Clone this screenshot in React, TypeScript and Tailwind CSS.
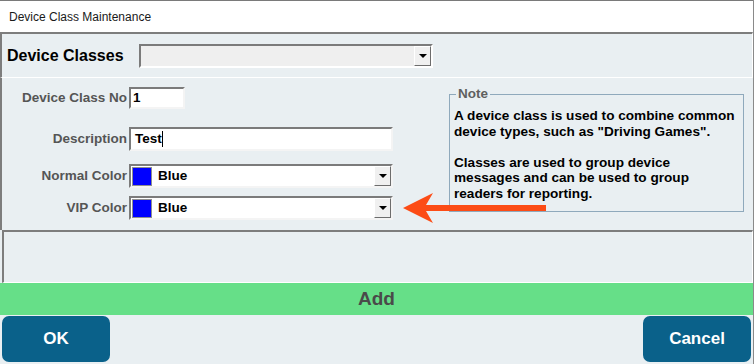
const font = { fontFamily: "'Liberation Sans', Arial, sans-serif" };

function DropButton() {
  return (
    <div className="w-[17px] h-full bg-[#f0f0f0] border border-t-white border-l-white border-r-[#6d6d6d] border-b-[#6d6d6d] flex items-center justify-center">
      <div className="w-0 h-0 border-l-[4px] border-r-[4px] border-t-[4px] border-l-transparent border-r-transparent border-t-black" />
    </div>
  );
}

function ColorSelect() {
  return (
    <div className="w-[264px] h-[24px] flex border-2 border-t-[#7b7b7b] border-l-[#7b7b7b] border-b-[#f4f4f4] border-r-[#f4f4f4] bg-white">
      <div className="flex-1 flex items-center pl-[1px]">
        <div className="w-[20px] h-[19px] bg-[#0000ff] border border-[#8f8f8f]" />
        <span className="ml-[6px] text-[13.5px] font-bold text-black">Blue</span>
      </div>
      <DropButton />
    </div>
  );
}

export default function App() {
  return (
    <div
      className="relative w-[754px] h-[364px] bg-[#e9eff2] flex flex-col overflow-hidden border-r border-[#8a8a8a]"
      style={font}
    >
      {/* Title bar */}
      <div className="h-[32px] shrink-0 bg-white border-t border-[#7a7a7a] flex items-center pl-[9px]">
        <span className="text-[12px] text-[#1a1a1a]">Device Class Maintenance</span>
      </div>

      {/* Device classes header */}
      <div className="h-[46px] shrink-0 border-t-2 border-l-2 border-[#7d7d7d] border-b border-b-white border-r border-r-white flex items-center">
        <span className="ml-[5px] w-[120px] text-[16px] font-bold text-black whitespace-nowrap">Device Classes</span>
        <div className="ml-[12px] w-[294px] h-[24px] flex border-2 border-t-[#7b7b7b] border-l-[#7b7b7b] border-b-white border-r-white bg-[#efefef]">
          <div className="flex-1" />
          <DropButton />
        </div>
      </div>

      {/* Form */}
      <div className="h-[152px] shrink-0 flex border-l-2 border-[#7d7d7d]">
        <div className="w-[447px] flex flex-col">
          <div className="flex items-center mt-[9px]">
            <span className="w-[127px] text-right pr-[2px] text-[13.5px] font-bold text-[#555] whitespace-nowrap">Device Class No</span>
            <div className="w-[56px] h-[22px] border-2 border-t-[#7b7b7b] border-l-[#7b7b7b] border-b-[#f4f4f4] border-r-[#f4f4f4] bg-white flex items-center pl-[2px] text-[13.5px] font-bold text-black">
              1
            </div>
          </div>
          <div className="flex items-center mt-[18px]">
            <span className="w-[127px] text-right pr-[2px] text-[13.5px] font-bold text-[#555]">Description</span>
            <div className="w-[264px] h-[24px] border-2 border-t-[#7b7b7b] border-l-[#7b7b7b] border-b-[#f4f4f4] border-r-[#f4f4f4] bg-white flex items-center pl-[4px] text-[13.5px] font-bold text-black">
              Test
              <span className="w-px h-[16px] bg-black" />
            </div>
          </div>
          <div className="flex items-center mt-[13px]">
            <span className="w-[127px] text-right pr-[2px] text-[13.5px] font-bold text-[#555]">Normal Color</span>
            <ColorSelect />
          </div>
          <div className="flex items-center mt-[8px]">
            <span className="w-[127px] text-right pr-[2px] text-[13.5px] font-bold text-[#555]">VIP Color</span>
            <ColorSelect />
          </div>
        </div>

        {/* Note */}
        <div className="relative mt-[16px] w-[295px] h-[118px] border border-[#8fa9bc] pl-[4px] pt-[13px]">
          <span className="absolute -top-[9px] left-[6px] px-[2px] bg-[#e9eff2] text-[13.5px] font-bold text-[#5f5f5f] leading-[16px]">
            Note
          </span>
          <p className="text-[13.6px] font-bold text-black leading-[15.5px] whitespace-nowrap">
            A device class is used to combine common
            <br />
            device types, such as "Driving Games".
            <br />
            <br />
            Classes are used to group device
            <br />
            messages and can be used to group
            <br />
            readers for reporting.
          </p>
        </div>
      </div>

      {/* Empty panel */}
      <div className="h-[53px] shrink-0 ml-[2px] border-t-2 border-l-2 border-[#7d7d7d] border-r border-r-white border-b border-b-white" />

      {/* Add bar */}
      <div className="h-[32px] shrink-0 bg-[#66df88] flex items-center justify-center">
        <span className="text-[19px] font-bold text-[#4a4a4a]">Add</span>
      </div>

      {/* Buttons */}
      <div className="flex-1 flex justify-between px-[2px] pt-[1px] pb-[2px]">
        <button className="w-[108px] h-full rounded-[7px] bg-[#0a618a] text-white text-[17px] font-bold">OK</button>
        <button className="w-[108px] h-full rounded-[7px] bg-[#0a618a] text-white text-[17px] font-bold">Cancel</button>
      </div>

      {/* Annotation arrow */}
      <svg className="absolute left-0 top-0 pointer-events-none" width="754" height="364">
        <path d="M403 208 L433 193 L426 205 L546 205 L546 211 L426 211 L433 223 Z" fill="#fc4c16" />
      </svg>
    </div>
  );
}
